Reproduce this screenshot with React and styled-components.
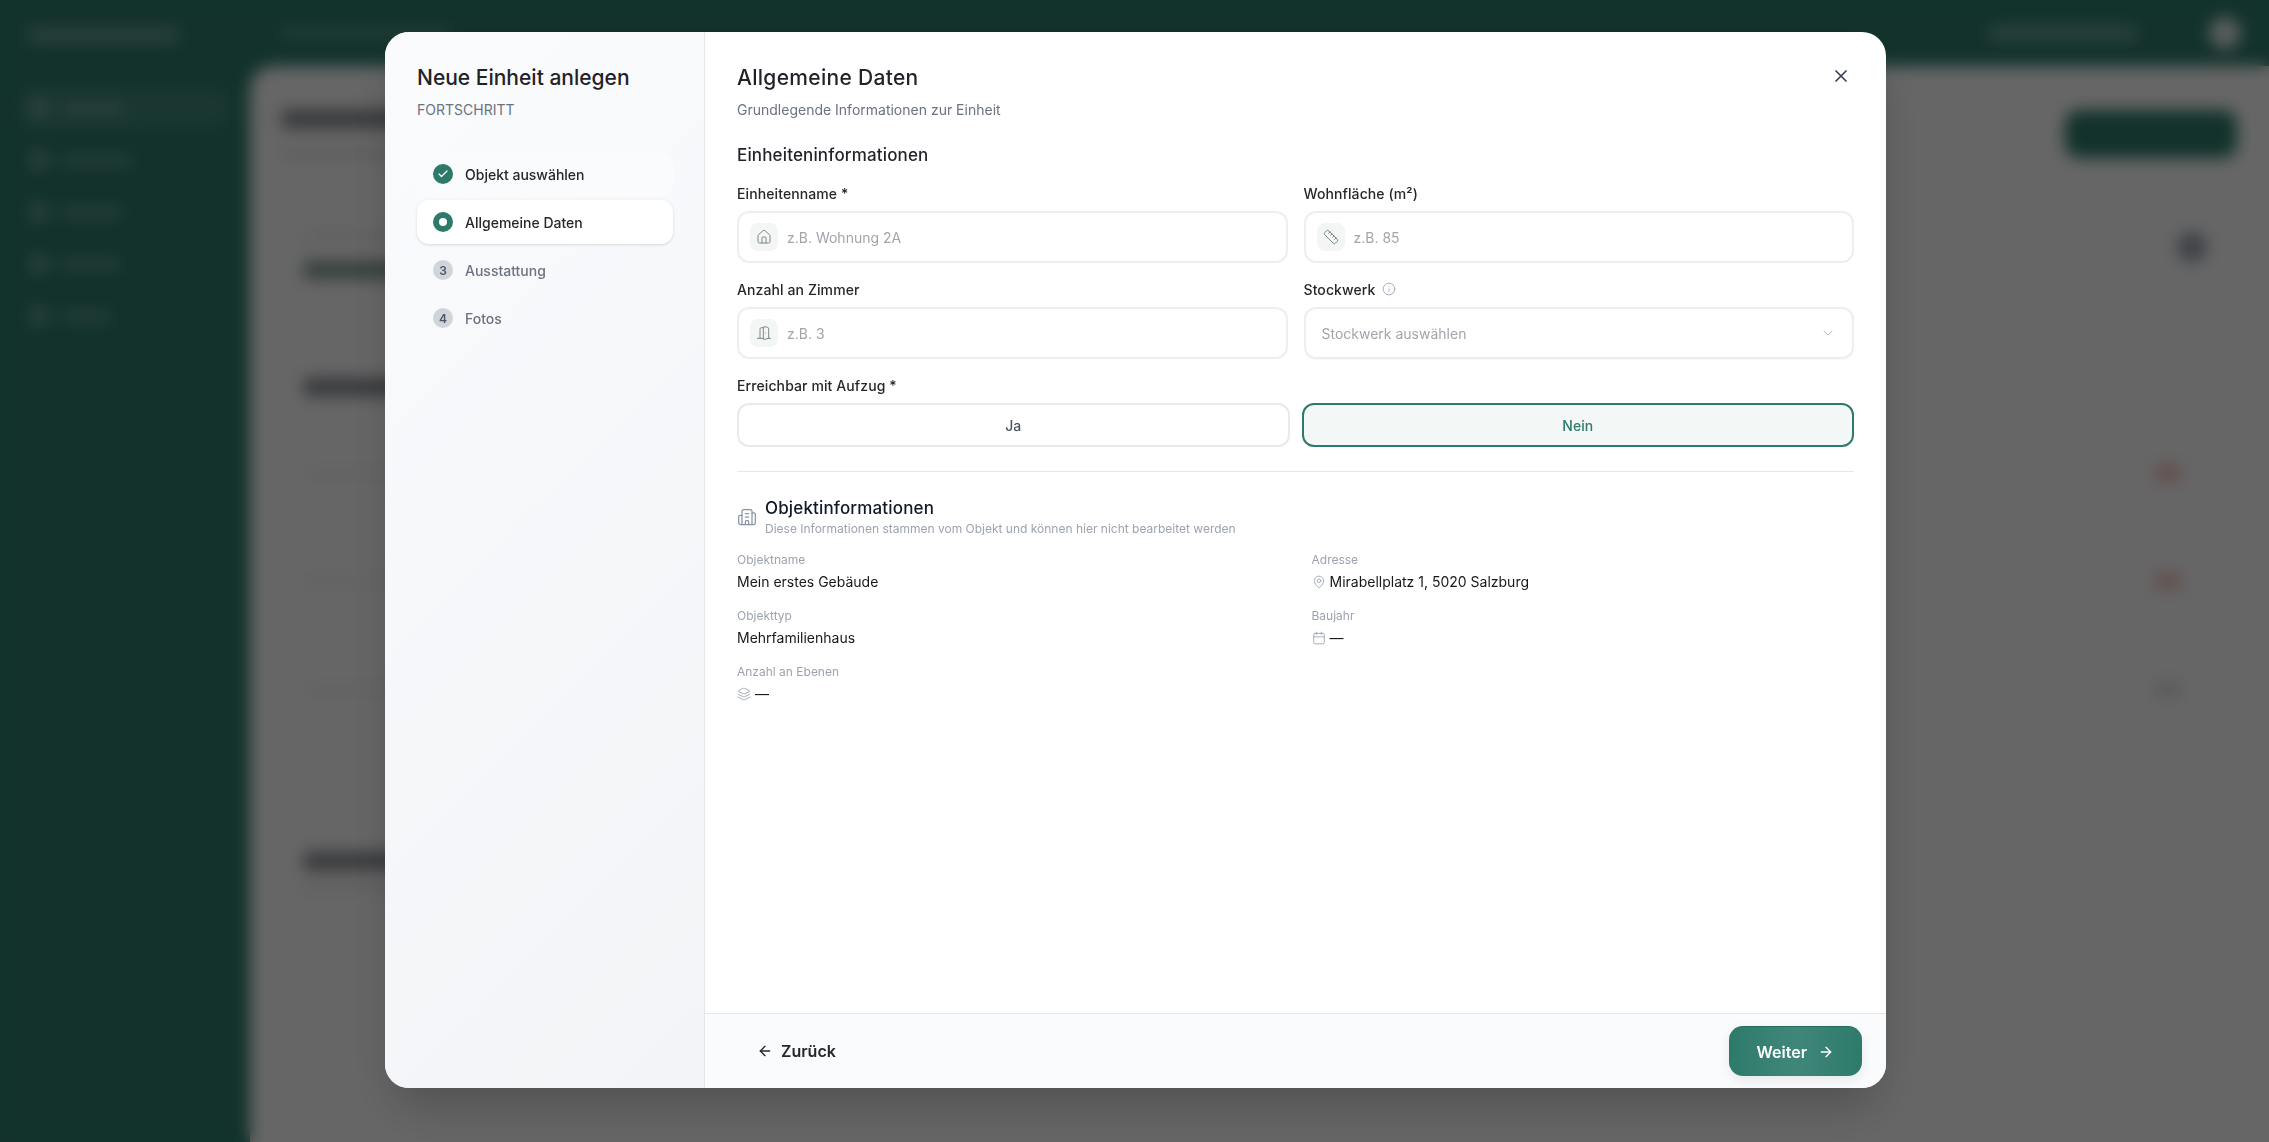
import styled, { createGlobalStyle } from "styled-components";
import {
  ArrowLeft,
  ArrowRight,
  Building2,
  Calendar,
  Check,
  ChevronDown,
  DoorOpen,
  House,
  Info,
  Layers,
  MapPin,
  Ruler,
  X,
} from "lucide-react";

const GlobalStyle = createGlobalStyle`
  html, body {
    margin: 0;
    padding: 0;
    height: 100%;
    overflow: hidden;
    font-family: "Inter", "Liberation Sans", sans-serif;
  }
  * {
    box-sizing: border-box;
  }
`;

const headingFont = `"Inter", "Liberation Sans", sans-serif`;

/* blurred page behind the dialog */
const Shell = styled.div`
  display: grid;
  grid-template-columns: 250px 1fr;
  height: 1142px;
  background: #307d6e;
`;

const SideNav = styled.div`
  display: flex;
  flex-direction: column;
  padding: 28px 20px;
`;

const Logo = styled.div`
  width: 150px;
  height: 14px;
  margin: 0 0 44px 8px;
  background: #ffffff;
  opacity: 0.3;
`;

const NavItem = styled.div`
  display: flex;
  align-items: center;
  gap: 14px;
  height: 44px;
  margin-bottom: 8px;
  padding-left: 10px;
  border-radius: 10px;
  background: ${(p) => (p.$active ? "rgba(255,255,255,0.08)" : "transparent")};
`;

const NavDot = styled.div`
  width: 18px;
  height: 18px;
  border-radius: 5px;
  background: #ffffff;
  opacity: 0.3;
`;

const NavText = styled.div`
  width: ${(p) => p.$w}px;
  height: 9px;
  background: #ffffff;
  opacity: 0.28;
`;

const MainArea = styled.div`
  display: flex;
  flex-direction: column;
  min-width: 0;
`;

const TopBar = styled.div`
  display: flex;
  align-items: center;
  justify-content: space-between;
  height: 66px;
  padding: 0 28px 0 30px;
`;

const TopRight = styled.div`
  display: flex;
  align-items: center;
  gap: 72px;
`;

const TopPill = styled.div`
  width: 148px;
  height: 14px;
  background: #ffffff;
  opacity: 0.32;
`;

const Avatar = styled.div`
  width: 32px;
  height: 32px;
  border-radius: 50%;
  background: #ffffff;
  opacity: 0.85;
`;

const Panel = styled.div`
  flex: 1;
  display: flex;
  flex-direction: column;
  gap: 16px;
  padding: 44px 32px 0;
  background: #ffffff;
  border-radius: 24px 0 0 0;
`;

const PanelHead = styled.div`
  display: flex;
  justify-content: space-between;
  margin-bottom: 20px;
`;

const DarkBar = styled.div`
  width: ${(p) => p.$w}px;
  height: ${(p) => p.$h}px;
  margin-bottom: ${(p) => p.$mb || 0}px;
  background: ${(p) => p.$c || "#111827"};
  opacity: ${(p) => p.$o || 0.5};
`;

const MainButton = styled.div`
  width: 172px;
  height: 48px;
  border-radius: 14px;
  background: #307d6e;
`;

const BgCard = styled.div`
  display: flex;
  flex-direction: column;
  height: ${(p) => p.$h}px;
  padding: ${(p) => p.$pt}px 22px 0;
  border-radius: 16px;
  box-shadow: 0 1px 4px rgba(0, 0, 0, 0.06);
`;

const BgRow = styled.div`
  display: flex;
  align-items: center;
  justify-content: space-between;
  height: ${(p) => p.$h}px;
  padding-right: ${(p) => p.$pr || 0}px;
`;

const RoundThing = styled.div`
  width: 28px;
  height: 16px;
  border-radius: 8px;
  background: ${(p) => p.$c};
`;

const RoundIcon = styled.div`
  width: 30px;
  height: 30px;
  margin-bottom: 18px;
  border-radius: 50%;
  background: #9ca3af;
`;

/* dialog */
const Overlay = styled.div`
  position: fixed;
  inset: 0;
  display: flex;
  justify-content: center;
  align-items: flex-start;
  padding: 32px 0 0 2px;
  background: rgba(0, 0, 0, 0.6);
  backdrop-filter: blur(8px);
`;

const Modal = styled.div`
  position: relative;
  display: grid;
  grid-template-columns: 320px 1fr;
  width: 1501px;
  height: 1056px;
  border-radius: 24px;
  overflow: hidden;
  background: #ffffff;
  box-shadow: 0 25px 50px -12px rgba(0, 0, 0, 0.25);
`;

const Aside = styled.aside`
  padding: 32px 31px 32px 32px;
  background: linear-gradient(135deg, #fafbfd 0%, #f3f4f7 100%);
  border-right: 1px solid #e5e7eb;
`;

const AsideTitle = styled.h2`
  margin: 0;
  font-family: ${headingFont};
  font-size: 21px;
  line-height: 28px;
  font-weight: 500;
  color: #1f2226;
`;

const AsideCaption = styled.div`
  margin-top: 8px;
  margin-bottom: 32px;
  font-size: 14px;
  line-height: 20px;
  color: #6b7280;
`;

const Steps = styled.div`
  display: flex;
  flex-direction: column;
  gap: 4px;
`;

const Step = styled.div`
  display: flex;
  align-items: center;
  gap: 12px;
  height: 44px;
  padding: 0 16px;
  border-radius: 12px;
  font-size: 14px;
  font-weight: 500;
  color: ${(p) => (p.$state === "todo" ? "#6b7280" : "#27272a")};
  background: ${(p) =>
    p.$state === "active" ? "#ffffff" : p.$state === "done" ? "#fafbfd" : "transparent"};
  box-shadow: ${(p) => (p.$state === "active" ? "0 1px 3px rgba(0,0,0,0.14)" : "none")};
`;

const StepMark = styled.div`
  display: flex;
  align-items: center;
  justify-content: center;
  width: 20px;
  height: 20px;
  border-radius: 50%;
  flex-shrink: 0;
  font-size: 12px;
  font-weight: 600;
  color: ${(p) => (p.$todo ? "#4b5563" : "#ffffff")};
  background: ${(p) => (p.$todo ? "#d1d5db" : "#2d7a6a")};
`;

const StepDot = styled.div`
  width: 8px;
  height: 8px;
  border-radius: 50%;
  background: #ffffff;
`;

const Content = styled.div`
  display: flex;
  flex-direction: column;
  min-width: 0;
`;

const Body = styled.div`
  flex: 1;
  padding: 32px 32px 0;
`;

const CloseButton = styled.button`
  position: absolute;
  top: 34px;
  right: 35px;
  display: flex;
  padding: 0;
  border: 0;
  background: none;
  color: #374151;
`;

const Title = styled.h1`
  margin: 0;
  font-family: ${headingFont};
  font-size: 21px;
  line-height: 28px;
  font-weight: 500;
  letter-spacing: 0.3px;
  color: #1f2226;
`;

const Subtitle = styled.p`
  margin: 8px 0 0;
  font-size: 14px;
  line-height: 20px;
  color: #6b7280;
`;

const SectionTitle = styled.h3`
  margin: 23px 0 16px;
  font-family: ${headingFont};
  font-size: 17px;
  line-height: 24px;
  font-weight: 500;
  letter-spacing: 0.15px;
  color: #1f2226;
`;

const FormGrid = styled.div`
  display: grid;
  grid-template-columns: 1fr 1fr;
  column-gap: 16px;
  row-gap: 16px;
`;

const Field = styled.div`
  min-width: 0;
  margin-top: ${(p) => p.$mt || 0}px;
`;

const Label = styled.label`
  display: flex;
  align-items: center;
  gap: 6px;
  height: 20px;
  margin-bottom: 8px;
  font-size: 14px;
  font-weight: 500;
  letter-spacing: 0.1px;
  color: #27272a;
`;

const InputBox = styled.div`
  display: flex;
  align-items: center;
  gap: 9px;
  height: 52px;
  padding: 0 11px;
  border: 2px solid #eceef2;
  border-radius: 12px;
  background: #ffffff;
`;

const IconTile = styled.div`
  display: flex;
  align-items: center;
  justify-content: center;
  width: 28px;
  height: 28px;
  flex-shrink: 0;
  border-radius: 8px;
  background: #f3f6f5;
  color: #7b8a86;
`;

const Input = styled.input`
  flex: 1;
  min-width: 0;
  border: 0;
  outline: 0;
  padding: 0;
  font: inherit;
  font-size: 14px;
  background: transparent;

  &::placeholder {
    color: #a1a6ad;
    opacity: 1;
  }
`;

const SelectBox = styled(InputBox)`
  justify-content: space-between;
  padding: 0 16px;
  font-size: 14px;
  color: #a1a6ad;
  box-shadow: 0 1px 2px rgba(0, 0, 0, 0.04);
`;

const ToggleRow = styled.div`
  display: grid;
  grid-template-columns: 1fr 1fr;
  gap: 12px;
`;

const Toggle = styled.button`
  height: 44px;
  padding: 0;
  border-radius: 12px;
  border: 2px solid ${(p) => (p.$selected ? "#2d7a6a" : "#e8e9ee")};
  background: ${(p) => (p.$selected ? "#f3f7f6" : "#ffffff")};
  color: ${(p) => (p.$selected ? "#2d7a6a" : "#4b5563")};
  font-family: inherit;
  font-size: 14px;
  font-weight: 500;
`;

const Divider = styled.div`
  height: 1px;
  margin: 24px 0 24px;
  background: #e5e7eb;
`;

const InfoHead = styled.div`
  display: flex;
  align-items: center;
  gap: 8px;
  margin-bottom: 15px;
`;

const InfoHeadIcon = styled.div`
  display: flex;
  color: #8a94a6;
`;

const InfoTitle = styled.div`
  font-family: ${headingFont};
  font-size: 17px;
  line-height: 24px;
  font-weight: 500;
  letter-spacing: 0.15px;
  color: #111827;
`;

const InfoHint = styled.div`
  margin-top: 1px;
  font-size: 12px;
  line-height: 16px;
  color: #9ca3af;
`;

const InfoGrid = styled.div`
  display: grid;
  grid-template-columns: 1fr 1fr;
  column-gap: 32px;
  row-gap: 16px;
`;

const InfoLabel = styled.div`
  font-size: 12px;
  line-height: 16px;
  margin-bottom: 4px;
  color: #9ca3af;
`;

const InfoValue = styled.div`
  display: flex;
  align-items: center;
  gap: 4px;
  font-size: 14px;
  line-height: 20px;
  color: #18181b;

  svg {
    color: #9ca3af;
  }
`;

const Footer = styled.div`
  display: flex;
  align-items: center;
  justify-content: space-between;
  height: 75px;
  padding: 0 24px;
  border-top: 1px solid #e5e7eb;
  background: #fafbfd;
`;

const BackButton = styled.button`
  display: flex;
  align-items: center;
  gap: 8px;
  height: 50px;
  padding: 0 28px;
  border: 0;
  background: none;
  color: #27272a;
  font-family: inherit;
  font-size: 16px;
  font-weight: 600;
`;

const NextButton = styled.button`
  display: flex;
  align-items: center;
  gap: 11px;
  height: 50px;
  padding: 0 28px;
  border: 0;
  border-top: 1px solid #256b5c;
  border-radius: 14px;
  background: linear-gradient(90deg, #2d7a6a 0%, #40877a 50%, #2d7a6a 100%);
  box-shadow: 0 4px 12px rgba(0, 0, 0, 0.08);
  color: #ffffff;
  font-family: inherit;
  font-size: 16px;
  font-weight: 600;
`;

const navWidths = [62, 70, 60, 58, 48];

const steps = [
  { label: "Objekt auswählen", state: "done" },
  { label: "Allgemeine Daten", state: "active" },
  { label: "Ausstattung", state: "todo", nr: 3 },
  { label: "Fotos", state: "todo", nr: 4 },
];

const BlurredPage = () => (
  <Shell>
    <SideNav>
      <Logo />
      {navWidths.map((w, i) => (
        <NavItem key={i} $active={i === 0}>
          <NavDot />
          <NavText $w={w} />
        </NavItem>
      ))}
    </SideNav>
    <MainArea>
      <TopBar>
        <DarkBar $w={170} $h={10} $c="#ffffff" $o={0.2} />
        <TopRight>
          <TopPill />
          <Avatar />
        </TopRight>
      </TopBar>
      <Panel>
        <PanelHead>
          <div>
            <DarkBar $w={200} $h={18} $mb={22} />
            <DarkBar $w={280} $h={8} $o={0.12} />
          </div>
          <MainButton />
        </PanelHead>
        <BgCard $h={130} $pt={36}>
          <BgRow $h={52} $pr={8}>
            <div>
              <DarkBar $w={120} $h={6} $mb={22} $o={0.1} />
              <DarkBar $w={150} $h={18} $c="#1f4a40" $o={0.55} />
            </div>
            <RoundIcon />
          </BgRow>
        </BgCard>
        <BgCard $h={450} $pt={38}>
          <DarkBar $w={240} $h={18} $mb={23} />
          <BgRow $h={108} $pr={33}>
            <DarkBar $w={200} $h={6} $o={0.06} />
            <RoundThing $c="#f3c4ba" />
          </BgRow>
          <BgRow $h={108} $pr={33}>
            <DarkBar $w={200} $h={6} $o={0.06} />
            <RoundThing $c="#f3c4ba" />
          </BgRow>
          <BgRow $h={108} $pr={33}>
            <DarkBar $w={200} $h={6} $o={0.06} />
            <RoundThing $c="#dfe1e5" />
          </BgRow>
        </BgCard>
        <BgCard $h={300} $pt={46}>
          <DarkBar $w={240} $h={18} $mb={14} />
          <DarkBar $w={300} $h={6} $o={0.12} />
        </BgCard>
      </Panel>
    </MainArea>
  </Shell>
);

const App = () => {
  return (
    <>
      <GlobalStyle />
      <BlurredPage />
      <Overlay>
        <Modal>
          <Aside>
            <AsideTitle>Neue Einheit anlegen</AsideTitle>
            <AsideCaption>FORTSCHRITT</AsideCaption>
            <Steps>
              {steps.map((s) => (
                <Step key={s.label} $state={s.state}>
                  <StepMark $todo={s.state === "todo"}>
                    {s.state === "done" && <Check size={12} strokeWidth={2.5} />}
                    {s.state === "active" && <StepDot />}
                    {s.state === "todo" && s.nr}
                  </StepMark>
                  {s.label}
                </Step>
              ))}
            </Steps>
          </Aside>
          <Content>
            <CloseButton>
              <X size={20} />
            </CloseButton>
            <Body>
              <Title>Allgemeine Daten</Title>
              <Subtitle>Grundlegende Informationen zur Einheit</Subtitle>
              <SectionTitle>Einheiteninformationen</SectionTitle>
              <FormGrid>
                <Field>
                  <Label>Einheitenname *</Label>
                  <InputBox>
                    <IconTile>
                      <House size={16} strokeWidth={1.5} />
                    </IconTile>
                    <Input placeholder="z.B. Wohnung 2A" />
                  </InputBox>
                </Field>
                <Field>
                  <Label>Wohnfläche (m²)</Label>
                  <InputBox>
                    <IconTile>
                      <Ruler size={16} strokeWidth={1.5} />
                    </IconTile>
                    <Input placeholder="z.B. 85" />
                  </InputBox>
                </Field>
                <Field>
                  <Label>Anzahl an Zimmer</Label>
                  <InputBox>
                    <IconTile>
                      <DoorOpen size={16} strokeWidth={1.5} />
                    </IconTile>
                    <Input placeholder="z.B. 3" />
                  </InputBox>
                </Field>
                <Field>
                  <Label>
                    Stockwerk
                    <Info size={14} strokeWidth={1.5} color="#9ca3c0" />
                  </Label>
                  <SelectBox>
                    Stockwerk auswählen
                    <ChevronDown size={16} strokeWidth={1.5} color="#b8bcc4" />
                  </SelectBox>
                </Field>
              </FormGrid>
              <Field $mt={16}>
                <Label>Erreichbar mit Aufzug *</Label>
                <ToggleRow>
                  <Toggle>Ja</Toggle>
                  <Toggle $selected>Nein</Toggle>
                </ToggleRow>
              </Field>
              <Divider />
              <InfoHead>
                <InfoHeadIcon>
                  <Building2 size={20} strokeWidth={1.5} />
                </InfoHeadIcon>
                <div>
                  <InfoTitle>Objektinformationen</InfoTitle>
                  <InfoHint>
                    Diese Informationen stammen vom Objekt und können hier nicht bearbeitet werden
                  </InfoHint>
                </div>
              </InfoHead>
              <InfoGrid>
                <div>
                  <InfoLabel>Objektname</InfoLabel>
                  <InfoValue>Mein erstes Gebäude</InfoValue>
                </div>
                <div>
                  <InfoLabel>Adresse</InfoLabel>
                  <InfoValue>
                    <MapPin size={14} strokeWidth={1.5} />
                    Mirabellplatz 1, 5020 Salzburg
                  </InfoValue>
                </div>
                <div>
                  <InfoLabel>Objekttyp</InfoLabel>
                  <InfoValue>Mehrfamilienhaus</InfoValue>
                </div>
                <div>
                  <InfoLabel>Baujahr</InfoLabel>
                  <InfoValue>
                    <Calendar size={14} strokeWidth={1.5} />—
                  </InfoValue>
                </div>
                <div>
                  <InfoLabel>Anzahl an Ebenen</InfoLabel>
                  <InfoValue>
                    <Layers size={14} strokeWidth={1.5} />—
                  </InfoValue>
                </div>
              </InfoGrid>
            </Body>
            <Footer>
              <BackButton>
                <ArrowLeft size={16} />
                Zurück
              </BackButton>
              <NextButton>
                Weiter
                <ArrowRight size={16} />
              </NextButton>
            </Footer>
          </Content>
        </Modal>
      </Overlay>
    </>
  );
};

export default App;
